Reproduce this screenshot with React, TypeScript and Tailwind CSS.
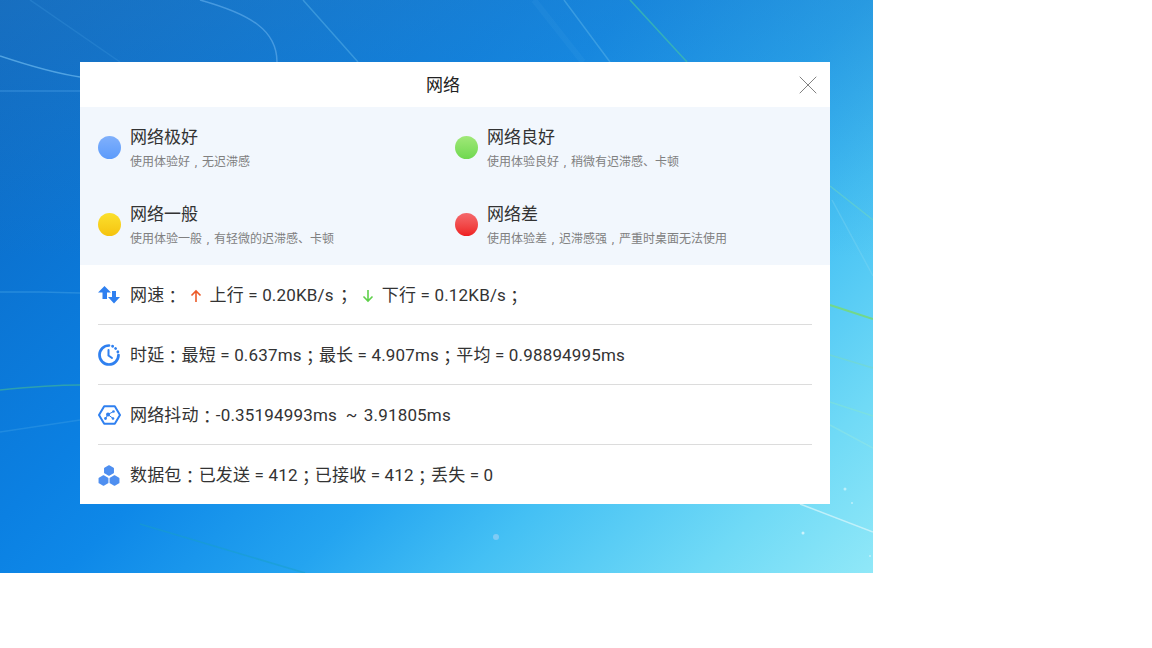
import React from 'react';
import { X } from 'lucide-react';

const font = { fontFamily: 'Roboto, "Noto Sans CJK SC", sans-serif' };

// centred full-width punctuation, as in the original
const P: React.FC<{ c: string }> = ({ c }) => <span className="font-['Noto_Sans_CJK_TC']">{c}</span>;
const Comma = () => <span className="inline-block w-[1em] text-center">,</span>;

const levels = [
  { title: '网络极好', desc: <>使用体验好<Comma />无迟滞感</>, dot: 'from-[#80b0fb] to-[#5c9bfb]' },
  { title: '网络良好', desc: <>使用体验良好<Comma />稍微有迟滞感、卡顿</>, dot: 'from-[#a0e878] to-[#6fd84f]' },
  { title: '网络一般', desc: <>使用体验一般<Comma />有轻微的迟滞感、卡顿</>, dot: 'from-[#fbe02c] to-[#f5c30c]' },
  { title: '网络差', desc: <>使用体验差<Comma />迟滞感强<Comma />严重时桌面无法使用</>, dot: 'from-[#f4686c] to-[#ee1c20]' },
];

const Wallpaper = () => (
  <svg className="absolute inset-0 w-full h-full" viewBox="0 0 873 573" fill="none" preserveAspectRatio="none">
    <path d="M200 0C250 14 277 30 277 62" stroke="#5aa8e8" strokeWidth="1.500" opacity="0.7" />
    <path d="M0 56C30 66 60 74 80 77" stroke="#6ab8ee" strokeWidth="1.500" opacity="0.7" />
    <path d="M0 91H80" stroke="#4aa0e6" strokeWidth="1" opacity="0.7" />
    <path d="M30 0L120 62" stroke="#3f97de" strokeWidth="1.500" opacity="0.3" />
    <path d="M303 0L358 62M564 0L610 62" stroke="#5ab4ea" strokeWidth="1.500" opacity="0.5" />
    <path d="M534 0L583 62" stroke="#5ab4ea" strokeWidth="6" opacity="0.1" />
    <path d="M630 0L687 62" stroke="#40c0a8" strokeWidth="1.500" opacity="0.7" />
    <path d="M0 390C30 387 60 385 80 385" stroke="#3cb09c" strokeWidth="1.500" opacity="0.7" />
    <path d="M0 292L40 292L80 293" stroke="#3f9fe6" strokeWidth="1.500" opacity="0.5" />
    <path d="M0 432L80 420" stroke="#3f9fe6" strokeWidth="1.500" opacity="0.4" />
    <path d="M140 524L305 573" stroke="#18a0c8" strokeWidth="1.500" opacity="0.5" />
    <path d="M830 186L873 220" stroke="#70d8c0" strokeWidth="1.500" opacity="0.5" />
    <path d="M832 200L873 276" stroke="#8adcf2" strokeWidth="1.500" opacity="0.3" />
    <path d="M830 305L873 319" stroke="#72d88a" strokeWidth="2" />
    <path d="M830 355L873 368" stroke="#7adcc0" strokeWidth="1.500" opacity="0.5" />
    <path d="M830 402L873 416" stroke="#8ae8c8" strokeWidth="1.500" opacity="0.4" />
    <path d="M830 425L873 448" stroke="#a4eed8" strokeWidth="1.500" opacity="0.3" />
    <path d="M800 504L873 532" stroke="#d0f4fa" strokeWidth="1.500" opacity="0.8" />
    <circle cx="496" cy="537" r="3" fill="#7ecbf5" />
    <circle cx="803" cy="533" r="1.500" fill="#e0f8fc" opacity="0.8" />
    <circle cx="845" cy="489" r="1.500" fill="#d8f6fb" opacity="0.7" />
    <circle cx="852" cy="503" r="1" fill="#d8f6fb" opacity="0.7" />
    <circle cx="870" cy="556" r="1" fill="#d8f6fb" opacity="0.7" />
  </svg>
);

const SpeedIcon = () => (
  <svg width="22" height="18" viewBox="0 0 22 18" fill="#2f80f0">
    <path d="M6.500 0L13 6.500H9V13H4.500V6.500H0Z" />
    <path d="M14 5H18V11H22L16 17.500L10 11H14Z" />
  </svg>
);

const ClockIcon = () => (
  <svg width="22" height="22" viewBox="0 0 22 22" fill="none" stroke="#2f80f0" strokeWidth="2.700" strokeLinecap="round">
    <path d="M11 1.500A9.500 9.500 0 1 0 20.500 11" />
    <path d="M14.500 2.200L14.700 2.300M17.500 4.400L17.700 4.600M19.800 7.700L19.900 8" />
    <path d="M10.500 6V11.500L14 14" strokeWidth="2" />
  </svg>
);

const JitterIcon = () => (
  <svg width="23" height="20" viewBox="0 0 23 20" fill="none" stroke="#2f80f0">
    <path d="M6.200 1.200H16.800L22 10L16.800 18.800H6.200L1 10Z" strokeWidth="2" strokeLinejoin="round" />
    <path d="M7.500 13.500L10 9.500L15.500 6.500M10 9.500L15 13.500" strokeWidth="1" />
    <circle cx="7.500" cy="13.500" r="1.400" fill="#2f80f0" stroke="none" />
    <circle cx="10" cy="9.500" r="2" fill="#2f80f0" stroke="none" />
    <circle cx="15.500" cy="6.500" r="1.300" fill="#2f80f0" stroke="none" />
    <circle cx="15" cy="13.500" r="1.300" fill="#2f80f0" stroke="none" />
  </svg>
);

const PacketIcon = () => (
  <svg width="22" height="21" viewBox="0 0 22 21" fill="#4f8ff0" stroke="#4f8ff0" strokeWidth="1.500" strokeLinejoin="round">
    <path d="M11 1L15.200 3.300V7.700L11 10L6.800 7.700V3.300Z" />
    <path d="M5.500 11L9.700 13.300V17.700L5.500 20L1.300 17.700V13.300Z" />
    <path d="M16.500 11L20.700 13.300V17.700L16.500 20L12.300 17.700V13.300Z" />
  </svg>
);

const ArrowUp = () => (
  <svg width="12" height="14" viewBox="0 0 12 14" fill="none" stroke="#ec5a28" strokeWidth="1.600">
    <path d="M6 13V2M1.500 6.500L6 2L10.500 6.500" />
  </svg>
);

const ArrowDown = () => (
  <svg width="12" height="14" viewBox="0 0 12 14" fill="none" stroke="#5fd04a" strokeWidth="1.600">
    <path d="M6 1V12M1.500 7.500L6 12L10.500 7.500" />
  </svg>
);

const Row: React.FC<{ icon: React.ReactNode; last?: boolean; children: React.ReactNode }> = ({ icon, last, children }) => (
  <div className={`flex items-center h-[60px] ${last ? '' : 'border-b border-[#dcdcdc]'}`}>
    <div className="w-[32px] shrink-0 flex items-center">{icon}</div>
    <div className="flex items-center pt-[2px] text-[17px] text-[#333] whitespace-pre tracking-[0.17px]">{children}</div>
  </div>
);

export default function App() {
  return (
    <div className="w-[1152px] h-[648px] bg-white overflow-hidden" style={font}>
      <div className="relative w-[873px] h-[573px] pl-[80px] pt-[62px] bg-[linear-gradient(180deg,rgba(50,130,190,0.3)_0%,transparent_45%),linear-gradient(135deg,#0c66c0_0%,#0b80e2_36%,#0e88e8_44%,#24a4f0_60%,#44c0f4_72%,#70daf6_88%,#90e8f8_100%)]">
        <Wallpaper />
        <div className="relative w-[750px] h-[442px] bg-white flex flex-col">
          <div className="relative h-[45px] shrink-0 flex items-center justify-center pr-[24px] pt-[2px] text-[17px] text-[#222]">
            网络
            <X className="absolute right-[6px] top-[7px] w-[32px] h-[32px] text-[#777]" strokeWidth={0.7} />
          </div>
          <div className="h-[158px] shrink-0 bg-[#f2f7fd] grid grid-cols-[357px_1fr] grid-rows-[77px_77px] pt-[2px] pl-[18px]">
            {levels.map(l => (
              <div key={l.title} className="flex items-center gap-[9px]">
                <div className={`w-[23px] h-[23px] rounded-full bg-gradient-to-b ${l.dot}`} />
                <div className="flex flex-col">
                  <div className="text-[17px] leading-[25px] text-[#333]">{l.title}</div>
                  <div className="text-[12px] leading-[18px] mt-[3px] text-[#808080]">{l.desc}</div>
                </div>
              </div>
            ))}
          </div>
          <div className="px-[18px] flex flex-col">
            <Row icon={<SpeedIcon />}>
              网速<P c="：" />
              <span className="mx-[8px] flex"><ArrowUp /></span>
              上行 = 0.20KB/s
              <span className="ml-[2px]"><P c="；" /></span>
              <span className="ml-[9px] mr-[8px] flex"><ArrowDown /></span>
              下行 = 0.12KB/s<P c="；" />
            </Row>
            <Row icon={<ClockIcon />}>时延<P c="：" />最短 = 0.637ms<P c="；" />最长 = 4.907ms<P c="；" />平均 = 0.98894995ms</Row>
            <Row icon={<JitterIcon />}>网络抖动<P c="：" />{'-0.35194993ms  ~ '}<span className="ml-[2px]">3.91805ms</span></Row>
            <Row icon={<PacketIcon />} last>数据包<P c="：" />已发送 = 412<P c="；" />已接收 = 412<P c="；" />丢失 = 0</Row>
          </div>
        </div>
      </div>
    </div>
  );
}
